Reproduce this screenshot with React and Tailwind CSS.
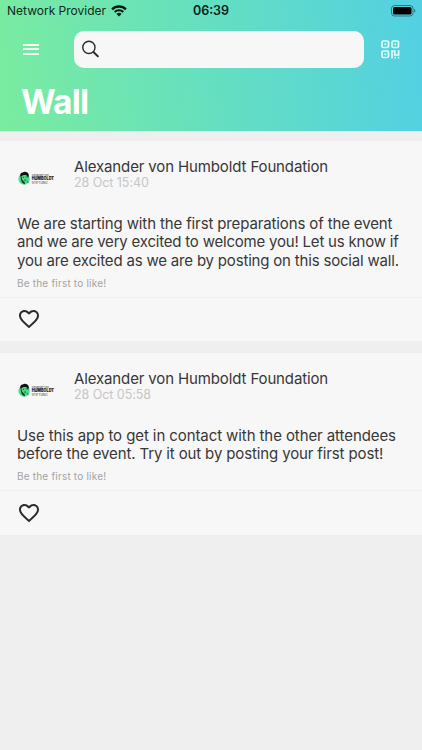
import React from 'react';
import { MdFavoriteBorder } from 'react-icons/md';

const posts = [
  {
    id: 1,
    author: 'Alexander von Humboldt Foundation',
    date: '28 Oct 15:40',
    lines: [
      { text: 'We are starting with the first preparations of the event', tracking: 'tracking-[-0.13px]' },
      { text: 'and we are very excited to welcome you! Let us know if', tracking: 'tracking-[-0.205px]' },
      { text: 'you are excited as we are by posting on this social wall.', tracking: 'tracking-[-0.185px]' },
    ],
  },
  {
    id: 2,
    author: 'Alexander von Humboldt Foundation',
    date: '28 Oct 05:58',
    lines: [
      { text: 'Use this app to get in contact with the other attendees', tracking: 'tracking-[-0.09px]' },
      { text: 'before the event. Try it out by posting your first post!', tracking: 'tracking-[-0.13px]' },
    ],
  },
];

const WifiIcon = () => (
  <svg width="16" height="12" viewBox="0 0 16 12" fill="none" stroke="#0b1a14">
    <path d="M1.1 4.3a9.8 9.8 0 0 1 13.8 0" strokeWidth="2.4" />
    <path d="M3.7 7a6.1 6.1 0 0 1 8.6 0" strokeWidth="2.1" />
    <path d="M8 11.6 5.5 9.1a3.5 3.5 0 0 1 5 0z" fill="#0b1a14" stroke="none" />
  </svg>
);

const BatteryIcon = () => (
  <svg width="25" height="12" viewBox="0 0 25 12">
    <rect x="0.5" y="0.5" width="21.5" height="10.5" rx="3" fill="none" stroke="#1d4a50" strokeOpacity="0.65" />
    <rect x="2" y="2" width="18.5" height="7.5" rx="1.6" fill="#000" />
    <path d="M23.2 4v3.6c.8-.3 1.2-1 1.2-1.8s-.4-1.5-1.2-1.8z" fill="#1d4a50" fillOpacity="0.7" />
  </svg>
);

const SearchIcon = () => (
  <svg width="18" height="18" viewBox="0 0 18 18" fill="none" stroke="#2b2b2b">
    <circle cx="6.9" cy="7.4" r="6.1" strokeWidth="1.4" />
    <path d="M11.2 11.7 16.4 16.9" strokeWidth="2" />
  </svg>
);

const QrIcon = () => (
  <svg width="19" height="19" viewBox="0 0 19 19" fill="none" stroke="#e6fbfb">
    <rect x="1" y="1" width="6.5" height="6.5" rx="1.3" strokeWidth="1.7" />
    <rect x="11" y="1" width="6.5" height="6.5" rx="1.3" strokeWidth="1.7" />
    <rect x="1" y="11" width="6.5" height="6.5" rx="1.3" strokeWidth="1.7" />
    <path d="M11 18.4V11h2.8v4h3.8v-4.8" strokeWidth="1.7" />
    <g fill="#e6fbfb" stroke="none">
      <rect x="3.4" y="3.4" width="1.7" height="1.7" />
      <rect x="13.4" y="3.4" width="1.7" height="1.7" />
      <rect x="3.4" y="13.4" width="1.7" height="1.7" />
      <rect x="13.4" y="16.8" width="1.6" height="1.6" />
      <rect x="16.7" y="16.8" width="1.7" height="1.6" />
    </g>
  </svg>
);

const Logo = () => (
  <svg width="40" height="16" viewBox="0 0 40 16" className="overflow-visible">
    <circle cx="7.1" cy="9" r="5.7" fill="#4fdd8b" />
    <path d="M3.8 7.2C2.3 4.5 4 2.2 5.8 2.4 7.3.8 11.4 1.8 11.7 4.5c.3 1.6-.2 2.7-.9 3.6C10.6 6.2 9.8 5 8.3 5 6.6 5 5.2 5.2 3.8 7.2z" fill="#111" />
    <path d="M4.5 6.8c.2 2.6 1.2 4.3 3.1 4.9l.3 2.5c-2.2-.2-4-2.7-4.2-6.6z" fill="#153323" />
    <path d="M5.8 7.3h1.3M8.5 7h1.2M7.2 10h1.9M9.8 11.2l1.7 1.4" stroke="#153323" strokeWidth="0.8" fill="none" />
    <g fontFamily="Inter, sans-serif" fill="#222">
      <text x="14.7" y="5.6" fontSize="2.7" fontWeight="500" fill="#444" textLength="17" lengthAdjust="spacingAndGlyphs">Alexander von</text>
      <text x="14.7" y="10.4" fontSize="4.4" fontWeight="900" textLength="22.3" lengthAdjust="spacingAndGlyphs">HUMBOLDT</text>
      <text x="14.7" y="14.4" fontSize="3.9" fill="#333" textLength="15.8" lengthAdjust="spacingAndGlyphs">STIFTUNG</text>
    </g>
  </svg>
);

const Post = ({ post }) => (
  <article className="bg-[#f7f7f7]">
    <div className="flex h-[74px] pl-[17px] pt-[17px]">
      <div className="w-[57px] pt-[12px]">
        <Logo />
      </div>
      <div>
        <h2 className="whitespace-nowrap text-[15px] leading-[18px] tracking-[-0.13px] text-[#373737]">{post.author}</h2>
        <p className="whitespace-nowrap text-[12.5px] leading-[14px] tracking-[-0.05px] text-[#c6c6c6]">{post.date}</p>
      </div>
    </div>
    <div className="pl-[17px] text-[15px] leading-[18.3px] text-[#373737]">
      {post.lines.map((line) => (
        <p key={line.text} className={`whitespace-nowrap ${line.tracking}`}>{line.text}</p>
      ))}
    </div>
    <p className="h-[27px] pl-[17px] pt-[6px] text-[10px] leading-[14px] tracking-[0.2px] text-[#a3a3a3]">
      Be the first to like!
    </p>
    <div className="h-[44.5px] border-t border-[#efefef] pl-[17px] pt-[9.5px]">
      <button className="block">
        <MdFavoriteBorder size={24} color="#2c2c2c" />
      </button>
    </div>
  </article>
);

const App = () => {
  return (
    <div className="h-[750px] w-[422px] overflow-hidden bg-[#efefef] font-['Inter',sans-serif]">
      <header className="h-[131px] bg-[linear-gradient(83deg,#7aec9f_0%,#65dfc0_50%,#52d0e3_100%)]">
        <div className="grid h-[22px] grid-cols-3 items-center">
          <div className="flex items-center gap-[5px] pl-[7px]">
            <span className="whitespace-nowrap text-[12px] text-[#10291d]">Network Provider</span>
            <WifiIcon />
          </div>
          <span className="text-center text-[12.5px] font-semibold text-[#0a1f1b]">06:39</span>
          <div className="flex justify-end pr-[6px]">
            <BatteryIcon />
          </div>
        </div>
        <div className="flex h-[54px] items-center">
          <button className="ml-[23px] flex w-4 flex-col gap-[2.5px]">
            <span className="h-[2px] w-full bg-white/90" />
            <span className="h-[2px] w-full bg-white/90" />
            <span className="h-[2px] w-full bg-white/90" />
          </button>
          <div className="ml-[35px] flex h-[37px] w-[290px] items-center rounded-[10px] bg-[#f7f7f7] pl-2">
            <SearchIcon />
          </div>
          <button className="ml-[17px]">
            <QrIcon />
          </button>
        </div>
        <h1 className="pl-[21px] pt-[5px] text-[33.5px] font-bold leading-[42px] tracking-[-0.8px] text-white">Wall</h1>
      </header>
      <main className="flex flex-col gap-[11.5px] pt-[10px]">
        {posts.map((post) => (
          <Post key={post.id} post={post} />
        ))}
      </main>
    </div>
  );
};

export default App;
